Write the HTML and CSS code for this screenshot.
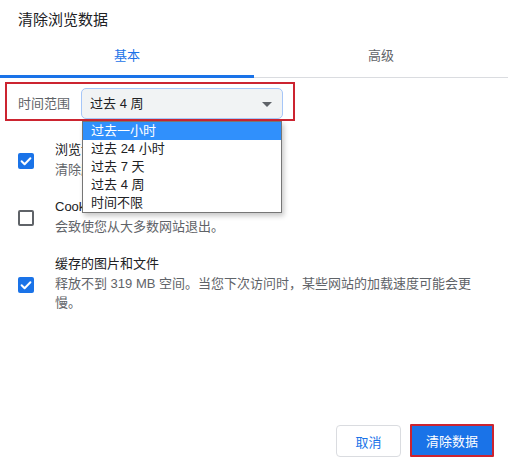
FILE: index.html
```html
<!DOCTYPE html>
<html lang="zh-CN">
<head>
<meta charset="utf-8">
<title>清除浏览数据</title>
<link rel="stylesheet" href="styles.css">
</head>
<body>
<div class="dialog">
  <h1 class="title">清除浏览数据</h1>
  <div class="tabs">
    <div class="tab active">基本</div>
    <div class="tab">高级</div>
  </div>
  <div class="range-row">
    <span class="range-label">时间范围</span>
    <div class="select-wrap">
      <div class="select">
        <span class="select-value">过去 4 周</span>
        <span class="arrow"></span>
      </div>
      <ul class="options">
        <li class="option selected">过去一小时</li>
        <li class="option">过去 24 小时</li>
        <li class="option">过去 7 天</li>
        <li class="option">过去 4 周</li>
        <li class="option">时间不限</li>
      </ul>
    </div>
  </div>
  <div class="items">
    <div class="item">
      <span class="checkbox checked"><svg viewBox="0 0 16 16" width="16" height="16"><polyline points="3.6,8.3 6.6,11.2 12.4,5.2" fill="none" stroke="#fff" stroke-width="2" stroke-linecap="round" stroke-linejoin="round"/></svg></span>
      <div class="item-text">
        <div class="item-label">浏览记录</div>
        <div class="item-desc">清除所有已同步设备中的浏览记录</div>
      </div>
    </div>
    <div class="item">
      <span class="checkbox"></span>
      <div class="item-text">
        <div class="item-label">Cookie 及其他网站数据</div>
        <div class="item-desc">会致使您从大多数网站退出。</div>
      </div>
    </div>
    <div class="item">
      <span class="checkbox checked"><svg viewBox="0 0 16 16" width="16" height="16"><polyline points="3.6,8.3 6.6,11.2 12.4,5.2" fill="none" stroke="#fff" stroke-width="2" stroke-linecap="round" stroke-linejoin="round"/></svg></span>
      <div class="item-text">
        <div class="item-label">缓存的图片和文件</div>
        <div class="item-desc">释放不到 319 MB 空间。当您下次访问时，某些网站的加载速度可能会更慢。</div>
      </div>
    </div>
  </div>
  <div class="footer">
    <button class="btn btn-cancel">取消</button>
    <button class="btn btn-primary">清除数据</button>
  </div>
</div>
</body>
</html>
```

FILE: styles.css
```css
* { box-sizing: border-box; }

html, body {
  margin: 0;
  padding: 0;
  background: #fff;
}

body {
  font-family: "Liberation Sans", "Noto Sans CJK SC", sans-serif;
  font-size: 13px;
  color: #202124;
}

.dialog {
  width: 508px;
  height: 463px;
  display: flex;
  flex-direction: column;
}

.title {
  margin: 0;
  padding: 10px 18px 0;
  font-size: 15px;
  font-weight: normal;
  line-height: 20px;
  color: #202124;
}

.tabs {
  margin-top: 6px;
  display: flex;
  border-bottom: 1px solid #dadce0;
  height: 42px;
}

.tab {
  flex: 1;
  text-align: center;
  padding-top: 10px;
  line-height: 20px;
  font-size: 13px;
  color: #5f6368;
}

.tab.active {
  color: #1a73e8;
  border-bottom: 3px solid #1a73e8;
  margin-bottom: -1px;
}

.range-row {
  margin: 4px 0 0 5px;
  width: 290px;
  height: 39px;
  border: 2px solid #cc2430;
  padding: 4px 0 0 11px;
  display: flex;
  align-items: flex-start;
  gap: 11px;
}

.range-label {
  line-height: 31px;
  color: #5f6368;
}

.select-wrap {
  position: relative;
  width: 202px;
}

.select {
  height: 31px;
  background: #f1f3f4;
  border: 1px solid #a6c6f8;
  border-radius: 5px;
  display: flex;
  align-items: center;
  justify-content: space-between;
  padding: 0 10px 0 8px;
  color: #202124;
  line-height: 20px;
}

.arrow {
  width: 0;
  height: 0;
  border-left: 5px solid transparent;
  border-right: 5px solid transparent;
  border-top: 5px solid #5f6368;
  margin-top: 1px;
}

.options {
  position: absolute;
  left: 1px;
  top: 33px;
  width: 200px;
  margin: 0;
  padding: 0;
  list-style: none;
  background: #fff;
  border: 1px solid #767676;
  box-shadow: 2px 3px 5px rgba(0, 0, 0, 0.22);
  z-index: 5;
}

.option {
  height: 18px;
  line-height: 18px;
  padding-left: 8px;
  color: #202124;
  font-size: 13px;
}

.option.selected {
  background: #3090fc;
  color: #fff;
}

.items {
  margin-top: 19px;
  display: flex;
  flex-direction: column;
  gap: 18px;
}

.item {
  display: flex;
  align-items: center;
  padding-left: 18px;
  gap: 21px;
}

.checkbox {
  flex: none;
  width: 16px;
  height: 16px;
  border: 2px solid #5f6368;
  border-radius: 2px;
  margin-top: 3px;
  display: flex;
}

.checkbox.checked {
  background: #1a73e8;
  border: none;
}

.item-text {
  width: 420px;
  line-height: 19.5px;
}

.item-label {
  color: #202124;
}

.item-desc {
  color: #5f6368;
}

.footer {
  margin-top: auto;
  display: flex;
  justify-content: flex-end;
  align-items: flex-end;
  gap: 9px;
  padding: 0 14px 6px 0;
}

.btn {
  font-family: inherit;
  font-size: 13px;
  border-radius: 4px;
  cursor: pointer;
  padding: 0;
}

.btn-cancel {
  width: 65px;
  height: 32px;
  background: #fff;
  border: 1px solid #dadce0;
  color: #1a73e8;
}

.btn-primary {
  width: 84px;
  height: 33px;
  background: #1a73e8;
  color: #fff;
  border: 2px solid #cc2430;
  border-radius: 1px;
}
```
